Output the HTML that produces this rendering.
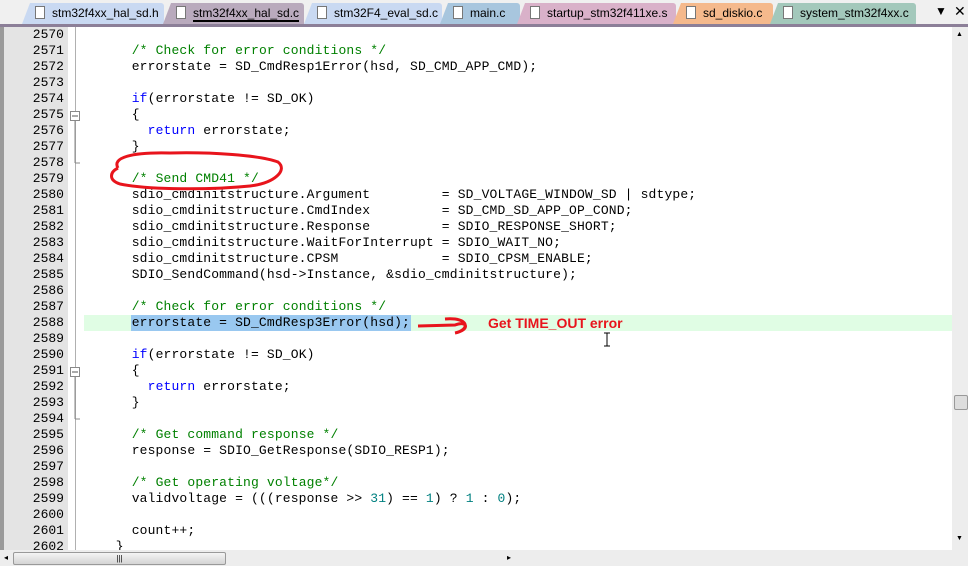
<!DOCTYPE html>
<html><head><meta charset="utf-8"><style>
*{margin:0;padding:0;box-sizing:border-box}
body{width:968px;height:566px;overflow:hidden;background:#fff;position:relative;font-family:"Liberation Sans",sans-serif}
#tabs{position:absolute;left:0;top:0;width:968px;height:24px;background:#f0f0f0}
.tab{position:absolute;top:3px;height:21px;font-size:12px;color:#000;padding-left:30px;line-height:20px;clip-path:polygon(8px 0,100% 0,100% 100%,0 100%);border-top-right-radius:3px;white-space:nowrap}
.tab i{position:absolute;left:13px;top:3px;width:10px;height:13px;background:#fff;border:1px solid #777}
#tabline{position:absolute;left:0;top:24px;width:968px;height:3px;background:#8c7f98}
#gut{position:absolute;left:0;top:27px;width:68px;height:523px;background:#e4e4e4;border-left:4px solid #9a9a9a}
#fold{position:absolute;left:75px;top:27px;width:1px;height:523px;background:#b0b0b0}
pre{font-family:"Liberation Mono",monospace;font-size:13px;line-height:16px;letter-spacing:0.15px}
#nums{position:absolute;left:0;top:27px;width:64px;text-align:right;color:#000;letter-spacing:0}
#code{position:absolute;left:84px;top:27px;color:#000}
.c{color:#008000}.k{color:#0000ff}.n{color:#008080}
#hl{position:absolute;left:84px;top:315px;width:868px;height:16px;background:#e0fde4}
#sel{position:absolute;left:131px;top:315px;width:280px;height:16px;background:#99c8f0}
#vs{position:absolute;left:952px;top:27px;width:16px;height:523px;background:#ededed}
#hs{position:absolute;left:0;top:550px;width:968px;height:16px;background:#ededed}
</style></head><body>
<div id="tabs">
<div class="tab" style="left:22px;width:142px;background:#c9d9f2">stm32f4xx_hal_sd.h<i></i></div>
<div class="tab" style="left:163px;width:141px;background:#b9aabd"><span style="border-bottom:2px solid #000">stm32f4xx_hal_sd.c</span><i></i></div>
<div class="tab" style="left:304px;width:138px;background:#c9d9f2">stm32F4_eval_sd.c<i></i></div>
<div class="tab" style="left:440px;width:80px;background:#a8c6de">main.c<i></i></div>
<div class="tab" style="left:517px;width:159px;background:#d9b1c9">startup_stm32f411xe.s<i></i></div>
<div class="tab" style="left:673px;width:100px;background:#f5b98c">sd_diskio.c<i></i></div>
<div class="tab" style="left:770px;width:146px;background:#a3c8bb">system_stm32f4xx.c<i></i></div>
<div style="position:absolute;left:935px;top:4px;font-size:12px">▼</div>
<div style="position:absolute;left:954px;top:3px;font-size:14px">✕</div>
</div>
<div id="tabline"></div>
<div id="gut"></div><div id="fold"></div>
<svg style="position:absolute;left:66px;top:27px" width="20" height="523">
<rect x="4.5" y="84.5" width="9" height="9" fill="#fff" stroke="#888"/><line x1="6" y1="89" x2="12" y2="89" stroke="#555"/>
<line x1="9" y1="94" x2="9" y2="136" stroke="#888"/><line x1="9" y1="136" x2="14" y2="136" stroke="#888"/>
<rect x="4.5" y="340.5" width="9" height="9" fill="#fff" stroke="#888"/><line x1="6" y1="345" x2="12" y2="345" stroke="#555"/>
<line x1="9" y1="350" x2="9" y2="392" stroke="#888"/><line x1="9" y1="392" x2="14" y2="392" stroke="#888"/>
</svg>
<div id="hl"></div><div id="sel"></div>
<pre id="nums">2570
2571
2572
2573
2574
2575
2576
2577
2578
2579
2580
2581
2582
2583
2584
2585
2586
2587
2588
2589
2590
2591
2592
2593
2594
2595
2596
2597
2598
2599
2600
2601
2602</pre>
<pre id="code">

      <span class="c">/* Check for error conditions */</span>
      errorstate = SD_CmdResp1Error(hsd, SD_CMD_APP_CMD);

      <span class="k">if</span>(errorstate != SD_OK)
      {
        <span class="k">return</span> errorstate;
      }

      <span class="c">/* Send CMD41 */</span>
      sdio_cmdinitstructure.Argument         = SD_VOLTAGE_WINDOW_SD | sdtype;
      sdio_cmdinitstructure.CmdIndex         = SD_CMD_SD_APP_OP_COND;
      sdio_cmdinitstructure.Response         = SDIO_RESPONSE_SHORT;
      sdio_cmdinitstructure.WaitForInterrupt = SDIO_WAIT_NO;
      sdio_cmdinitstructure.CPSM             = SDIO_CPSM_ENABLE;
      SDIO_SendCommand(hsd->Instance, &amp;sdio_cmdinitstructure);

      <span class="c">/* Check for error conditions */</span>
      errorstate = SD_CmdResp3Error(hsd);

      <span class="k">if</span>(errorstate != SD_OK)
      {
        <span class="k">return</span> errorstate;
      }

      <span class="c">/* Get command response */</span>
      response = SDIO_GetResponse(SDIO_RESP1);

      <span class="c">/* Get operating voltage*/</span>
      validvoltage = (((response &gt;&gt; <span class="n">31</span>) == <span class="n">1</span>) ? <span class="n">1</span> : <span class="n">0</span>);

      count++;
    }</pre>
<svg style="position:absolute;left:0;top:0" width="968" height="566">
<path d="M118 168 C112 158 130 152 170 153 C210 152 260 155 278 162 C288 170 275 183 250 186 C210 190 150 190 120 184 C108 180 110 172 118 168" fill="none" stroke="#e8141c" stroke-width="3"/>
<path d="M418 326 L455 325 C468 320 470 330 455 333 M445 319 C470 317 470 330 455 333" fill="none" stroke="#e8141c" stroke-width="3"/>
<text x="488" y="328" font-family="Liberation Sans,sans-serif" font-weight="bold" font-size="14" fill="#e8141c">Get TIME_OUT error</text>
<path d="M604 333 h6 M607 333 v13 M604 346 h6" stroke="#000" stroke-width="1"/>
</svg>
<div id="vs"><div style="position:absolute;left:2px;top:368px;width:14px;height:15px;background:#ddd;border:1px solid #999;border-radius:2px"></div><div style="position:absolute;left:4px;top:4px;font-size:7px">▲</div><div style="position:absolute;left:4px;top:508px;font-size:7px">▼</div></div>
<div id="hs"><div style="position:absolute;left:13px;top:2px;width:213px;height:13px;background:linear-gradient(#f4f4f4,#d4d4d4);border:1px solid #999;border-radius:2px;text-align:center;font-size:8px;line-height:11px">|||</div><div style="position:absolute;left:4px;top:3px;font-size:8px">◂</div><div style="position:absolute;left:507px;top:3px;font-size:8px">▸</div></div>
</body></html>
